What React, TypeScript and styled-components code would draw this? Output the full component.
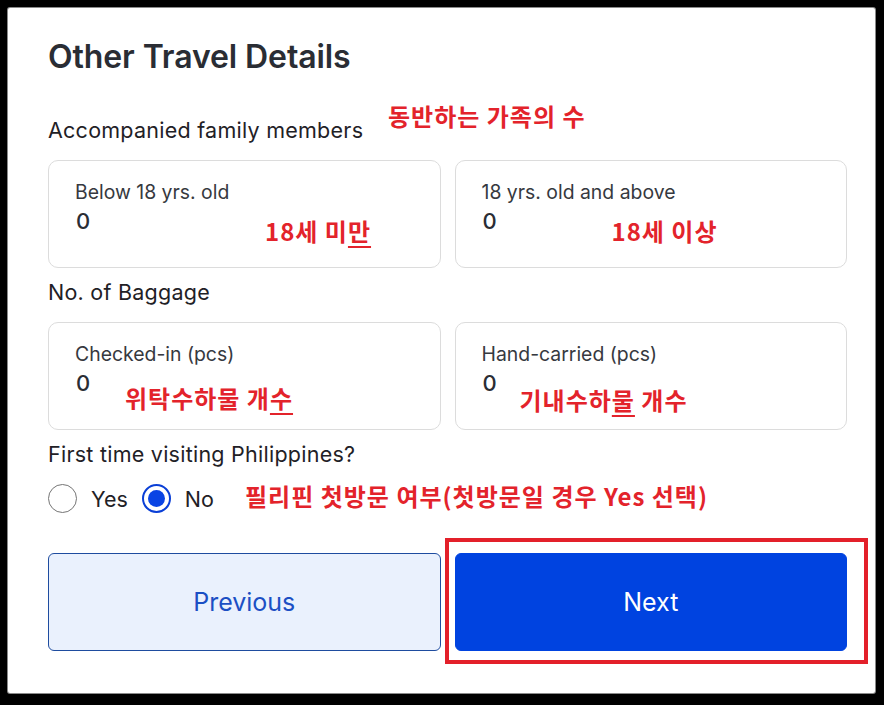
import React from "react";
import styled, { createGlobalStyle } from "styled-components";

const GlobalStyle = createGlobalStyle`
  html, body {
    margin: 0;
    padding: 0;
    background: #000;
  }
  * {
    box-sizing: border-box;
  }
`;

const Frame = styled.div`
  width: 884px;
  height: 705px;
  background: #000;
  padding: 8px 9px 12px 8px;
`;

const Panel = styled.div`
  position: relative;
  height: 100%;
  background: #fff;
  border-radius: 2px;
  box-shadow: 0 0 0 1px #8a8a8a;
  padding: 29px 28px 0 40px;
  font-family: Inter, "Noto Sans", sans-serif;
  color: #1f2126;
`;

const Title = styled.h1`
  margin: 0 0 39px;
  font-size: 32px;
  line-height: 40px;
  font-weight: 600;
  color: #2a2d34;
  letter-spacing: -0.1px;
`;

const SectionLabel = styled.div`
  position: relative;
  font-size: 21.5px;
  line-height: 28px;
  letter-spacing: 0.25px;
  color: #1f2126;
  margin-bottom: 15.5px;
`;

const Grid = styled.div`
  display: grid;
  grid-template-columns: 1fr 1fr;
  gap: 14px;
  margin-bottom: 10.5px;
`;

const Card = styled.div`
  position: relative;
  height: 108px;
  border: 1px solid #dcdcdc;
  border-radius: 10px;
  padding: 19px 26px 0;
`;

const FieldLabel = styled.div`
  font-size: 19.4px;
  line-height: 24px;
  color: #363940;
`;

const FieldValue = styled.div`
  margin-top: 3px;
  font-size: 22px;
  line-height: 28px;
  color: #2a2d34;
  padding-left: 1px;
  font-weight: 500;
`;

const Note = styled.span<{ $left: number; $top: number }>`
  position: absolute;
  left: ${(p) => p.$left}px;
  top: ${(p) => p.$top}px;
  font-family: "Noto Sans CJK KR", "Noto Sans", sans-serif;
  font-weight: 700;
  font-size: 24px;
  line-height: 1;
  color: #e3232b;
  white-space: nowrap;
  letter-spacing: 1px;
`;

const Composing = styled.span`
  text-decoration: underline;
  text-decoration-thickness: 2px;
  text-underline-offset: 5px;
`;

const RadioRow = styled.div`
  position: relative;
  display: flex;
  align-items: center;
  gap: 14px;
  margin: 12px 0 39px;
  height: 30px;
`;

const RadioOption = styled.label`
  display: flex;
  align-items: center;
  gap: 14px;
  font-size: 21.5px;
  color: #1f2126;
`;

const RadioCircle = styled.span<{ $checked?: boolean }>`
  width: 29px;
  height: 29px;
  border-radius: 50%;
  border: ${(p) => (p.$checked ? "2.5px solid #0a3fd6" : "1.5px solid #757575")};
  display: flex;
  align-items: center;
  justify-content: center;
  &::after {
    content: "";
    width: 17px;
    height: 17px;
    border-radius: 50%;
    background: ${(p) => (p.$checked ? "#0a44e4" : "transparent")};
  }
`;

const Actions = styled.div`
  display: grid;
  grid-template-columns: 1fr 1fr;
  gap: 14px;
`;

const Button = styled.button<{ $primary?: boolean }>`
  height: 98px;
  border-radius: 6px;
  font-family: Inter, "Noto Sans", sans-serif;
  font-size: 25px;
  cursor: pointer;
  border: 1px solid ${(p) => (p.$primary ? "#0043e0" : "#1e4c9f")};
  background: ${(p) => (p.$primary ? "#0043e0" : "#eaf1fd")};
  color: ${(p) => (p.$primary ? "#ffffff" : "#1b4fc4")};
`;

const Highlight = styled.div`
  position: relative;
  display: flex;
  flex-direction: column;
  &::before {
    content: "";
    position: absolute;
    left: -10px;
    top: -15px;
    right: -21px;
    bottom: -13px;
    border: 4px solid #e3202a;
    pointer-events: none;
  }
`;

const fields = [
  [
    { label: "Below 18 yrs. old", note: <>18세 미<Composing>만</Composing></>, left: 216, top: 58 },
    { label: "18 yrs. old and above", note: <>18세 이상</>, left: 156, top: 58 },
  ],
  [
    { label: "Checked-in (pcs)", note: <>위탁수하물 개<Composing>수</Composing></>, left: 76, top: 63 },
    { label: "Hand-carried (pcs)", note: <>기내수하<Composing>물</Composing> 개수</>, left: 64, top: 65 },
  ],
];

export default function App() {
  return (
    <>
      <GlobalStyle />
      <Frame>
        <Panel>
          <Title>Other Travel Details</Title>

          <SectionLabel>
            Accompanied family members
            <Note $left={340} $top={-12}>동반하는 가족의 수</Note>
          </SectionLabel>
          <Grid>
            {fields[0].map((f) => (
              <Card key={f.label}>
                <FieldLabel>{f.label}</FieldLabel>
                <FieldValue>0</FieldValue>
                <Note $left={f.left} $top={f.top}>{f.note}</Note>
              </Card>
            ))}
          </Grid>

          <SectionLabel>No. of Baggage</SectionLabel>
          <Grid>
            {fields[1].map((f) => (
              <Card key={f.label}>
                <FieldLabel>{f.label}</FieldLabel>
                <FieldValue>0</FieldValue>
                <Note $left={f.left} $top={f.top}>{f.note}</Note>
              </Card>
            ))}
          </Grid>

          <SectionLabel>First time visiting Philippines?</SectionLabel>
          <RadioRow>
            <RadioOption>
              <RadioCircle />
              Yes
            </RadioOption>
            <RadioOption>
              <RadioCircle $checked />
              No
            </RadioOption>
            <Note $left={197} $top={0}>필리핀 첫방문 여부(첫방문일 경우 Yes 선택)</Note>
          </RadioRow>

          <Actions>
            <Button>Previous</Button>
            <Highlight>
              <Button $primary>Next</Button>
            </Highlight>
          </Actions>
        </Panel>
      </Frame>
    </>
  );
}
